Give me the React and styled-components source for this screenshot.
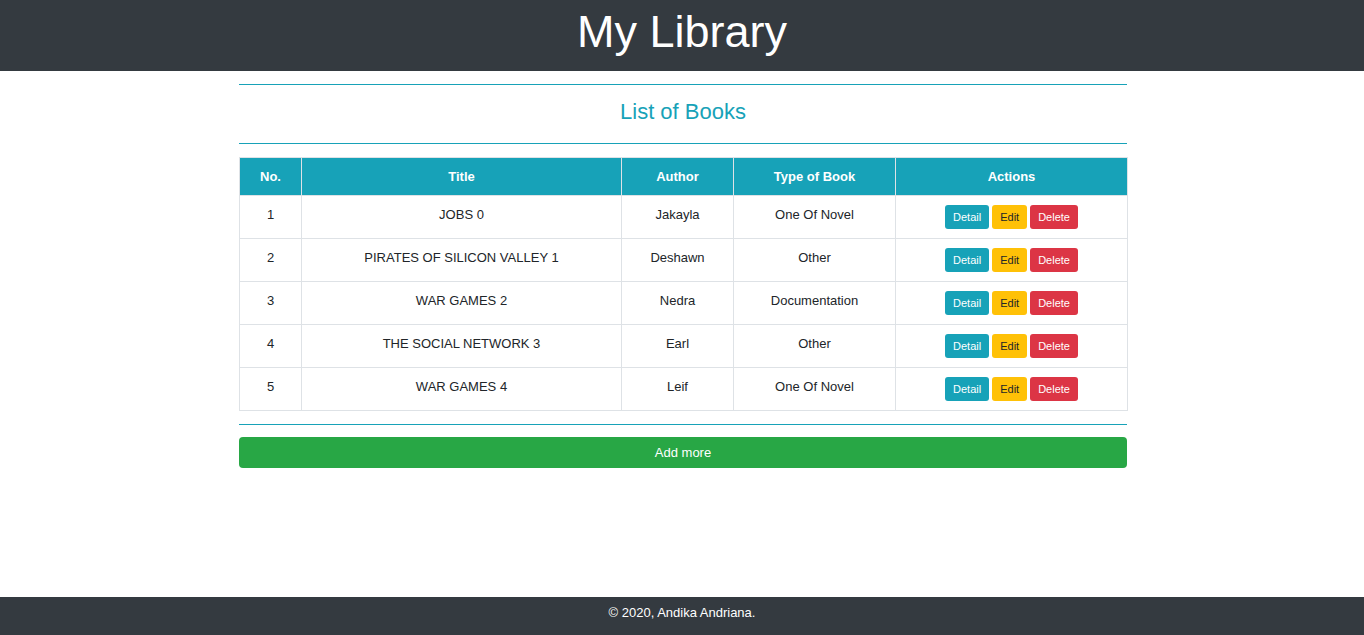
import styled, { createGlobalStyle } from 'styled-components';

const GlobalStyle = createGlobalStyle`
  html, body {
    margin: 0;
    padding: 0;
    height: 100%;
  }
  body {
    font-family: "Liberation Sans", Arial, sans-serif;
    color: #212529;
    background: #fff;
  }
  #root {
    min-height: 100vh;
    display: flex;
    flex-direction: column;
  }
`;

const Header = styled.header`
  background: #343a40;
  height: 71px;
  display: flex;
  align-items: center;
  justify-content: center;
`;

const Brand = styled.h1`
  margin: 0;
  color: #fff;
  font-weight: 400;
  font-size: 45px;
  line-height: 1;
  padding-bottom: 8px;
`;

const Main = styled.main`
  flex: 1;
  width: 888px;
  margin: 0 auto;
  padding-top: 13px;
  transform: translateX(1px);
`;

const Rule = styled.hr`
  margin: 0;
  border: 0;
  border-top: 1px solid #17a2b8;
`;

const Heading = styled.h2`
  margin: 0;
  height: 58px;
  padding-bottom: 4px;
  box-sizing: border-box;
  display: flex;
  align-items: center;
  justify-content: center;
  color: #17a2b8;
  font-weight: 400;
  font-size: 22px;
`;

const Table = styled.table`
  width: 100%;
  margin: 13px 0;
  border-collapse: collapse;
  table-layout: fixed;
  font-size: 13px;
`;

const Th = styled.th`
  background: #17a2b8;
  color: #fff;
  font-weight: 700;
  height: 37px;
  padding: 0 8px;
  border: 1px solid #dee2e6;
`;

const Td = styled.td`
  border: 1px solid #dee2e6;
  text-align: center;
  vertical-align: top;
  padding: 11px 8px 0;
  height: 31px;
`;

const ActionCell = styled(Td)`
  padding-top: 9px;
`;

const Actions = styled.div`
  display: flex;
  justify-content: center;
  gap: 3px;
`;

const colors = {
  info: ['#17a2b8', '#fff'],
  warning: ['#ffc107', '#212529'],
  danger: ['#dc3545', '#fff'],
};

const SmallButton = styled.button`
  font-family: inherit;
  font-size: 11px;
  height: 24px;
  padding: 0 8px;
  border: 0;
  border-radius: 3px;
  background: ${p => colors[p.$kind][0]};
  color: ${p => colors[p.$kind][1]};
  cursor: pointer;
`;

const AddButton = styled.button`
  display: block;
  width: 100%;
  margin-top: 12px;
  height: 31px;
  border: 0;
  border-radius: 4px;
  background: #28a745;
  color: #fff;
  font-family: inherit;
  font-size: 13px;
  cursor: pointer;
`;

const Footer = styled.footer`
  background: #343a40;
  height: 38px;
  color: #fff;
  font-size: 13px;
  text-align: center;
  padding-top: 8px;
  box-sizing: border-box;
`;

const columns = [
  ['No.', 62],
  ['Title', 320],
  ['Author', 112],
  ['Type of Book', 162],
  ['Actions', 232],
];

const books = [
  ['JOBS 0', 'Jakayla', 'One Of Novel'],
  ['PIRATES OF SILICON VALLEY 1', 'Deshawn', 'Other'],
  ['WAR GAMES 2', 'Nedra', 'Documentation'],
  ['THE SOCIAL NETWORK 3', 'Earl', 'Other'],
  ['WAR GAMES 4', 'Leif', 'One Of Novel'],
];

function App() {
  return (
    <>
      <GlobalStyle />
      <Header>
        <Brand>My Library</Brand>
      </Header>
      <Main>
        <Rule />
        <Heading>List of Books</Heading>
        <Rule />
        <Table>
          <colgroup>
            {columns.map(([name, w]) => (
              <col key={name} style={{ width: w }} />
            ))}
          </colgroup>
          <thead>
            <tr>
              {columns.map(([name]) => (
                <Th key={name}>{name}</Th>
              ))}
            </tr>
          </thead>
          <tbody>
            {books.map(([title, author, type], i) => (
              <tr key={i}>
                <Td>{i + 1}</Td>
                <Td>{title}</Td>
                <Td>{author}</Td>
                <Td>{type}</Td>
                <ActionCell>
                  <Actions>
                    <SmallButton $kind="info">Detail</SmallButton>
                    <SmallButton $kind="warning">Edit</SmallButton>
                    <SmallButton $kind="danger">Delete</SmallButton>
                  </Actions>
                </ActionCell>
              </tr>
            ))}
          </tbody>
        </Table>
        <Rule />
        <AddButton>Add more</AddButton>
      </Main>
      <Footer>© 2020, Andika Andriana.</Footer>
    </>
  );
}

export default App;
